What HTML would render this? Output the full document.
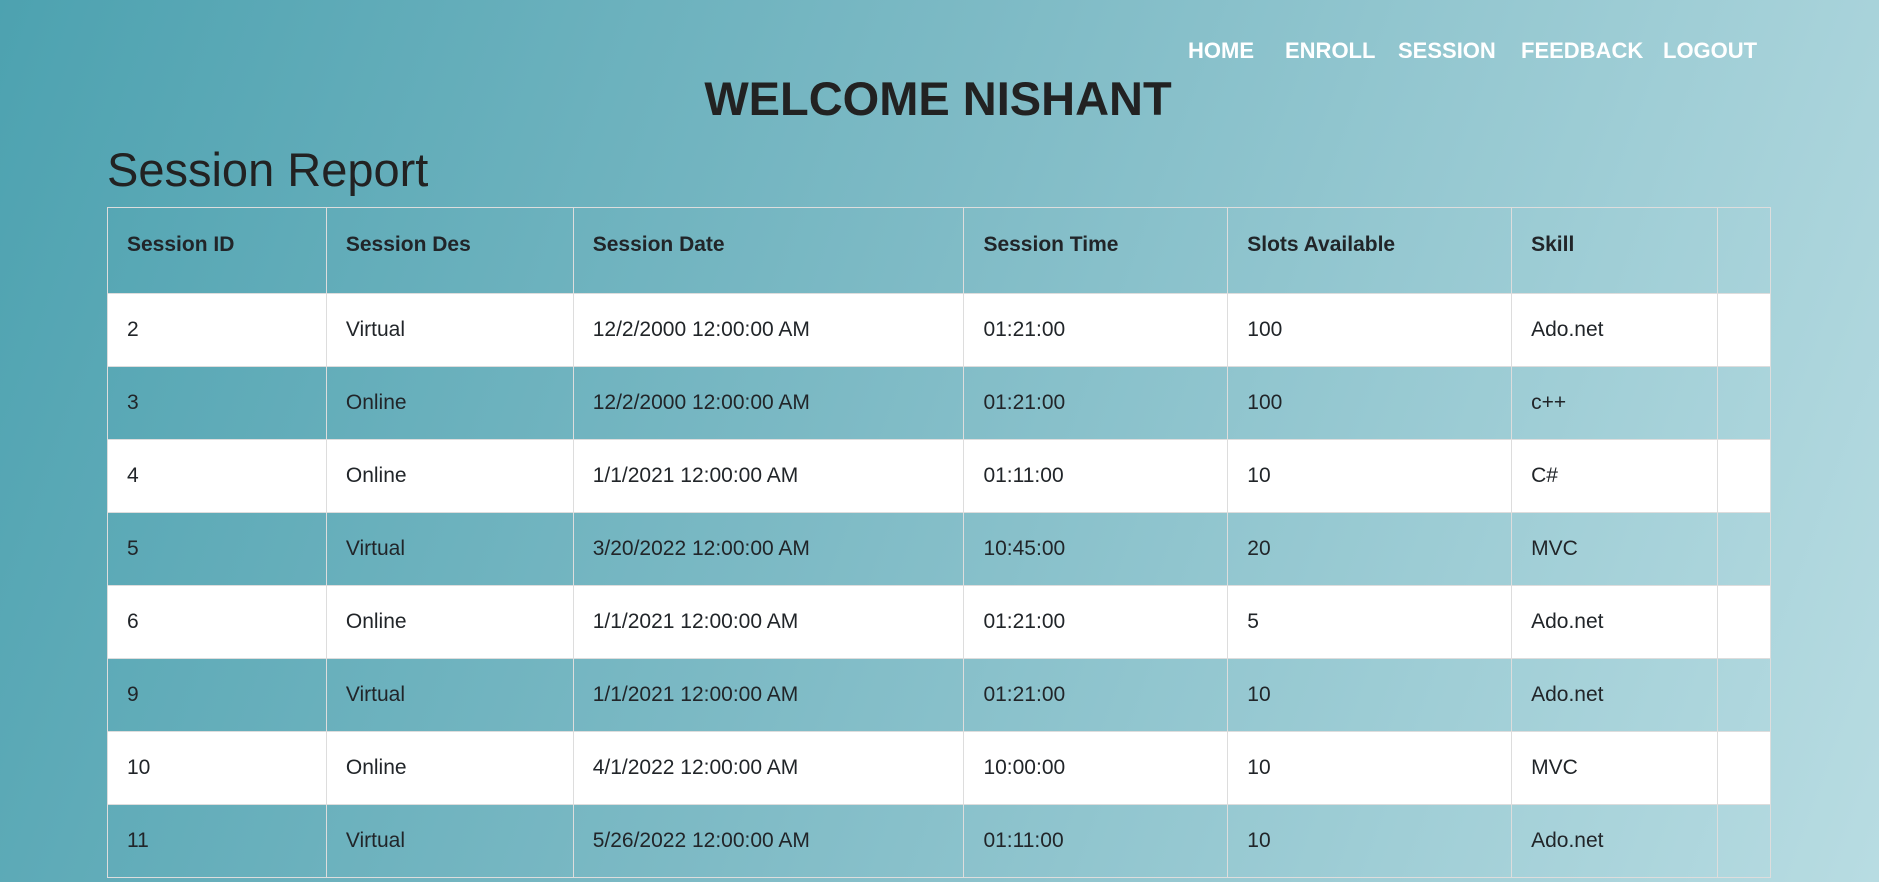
<!DOCTYPE html>
<html><head><meta charset="utf-8"><style>
html,body{margin:0;padding:0}
body{width:1879px;height:882px;overflow:hidden;background:linear-gradient(110deg,#4da2b0 0%,#7dbac5 45%,#b8dce2 100%);font-family:"Liberation Sans",sans-serif;color:#212529;position:relative}
.nav{position:absolute;top:38px;left:1188px;font-weight:bold;font-size:22px;color:#fff}
.nav span{position:absolute;white-space:nowrap}
h1{position:absolute;top:70px;left:0;width:1876px;text-align:center;margin:0;font-size:47px;font-weight:bold;color:#222;line-height:58px}
h2{position:absolute;top:141px;left:107px;margin:0;font-size:47px;font-weight:normal;line-height:58px;color:#222}
table{position:absolute;top:207px;left:107px;border-collapse:collapse;font-size:21px;width:1664px}
td,th{border:1px solid #ddd;padding:0 0 0 19px;text-align:left;height:72px}
th{height:73px;padding-bottom:12px;font-weight:bold;font-size:21px}
tr.w td{background:#fff}
</style></head><body>
<div class="nav"><span style="left:0">HOME</span><span style="left:97px">ENROLL</span><span style="left:210px">SESSION</span><span style="left:333px">FEEDBACK</span><span style="left:475px">LOGOUT</span></div>
<h1>WELCOME NISHANT</h1>
<h2>Session Report</h2>
<table>
<colgroup><col style="width:219px"><col style="width:247px"><col style="width:391px"><col style="width:264px"><col style="width:284px"><col style="width:206px"><col style="width:53px"></colgroup>
<tr><th>Session ID</th><th>Session Des</th><th>Session Date</th><th>Session Time</th><th>Slots Available</th><th>Skill</th><th></th></tr>
<tr class="w"><td>2</td><td>Virtual</td><td>12/2/2000 12:00:00 AM</td><td>01:21:00</td><td>100</td><td>Ado.net</td><td></td></tr>
<tr><td>3</td><td>Online</td><td>12/2/2000 12:00:00 AM</td><td>01:21:00</td><td>100</td><td>c++</td><td></td></tr>
<tr class="w"><td>4</td><td>Online</td><td>1/1/2021 12:00:00 AM</td><td>01:11:00</td><td>10</td><td>C#</td><td></td></tr>
<tr><td>5</td><td>Virtual</td><td>3/20/2022 12:00:00 AM</td><td>10:45:00</td><td>20</td><td>MVC</td><td></td></tr>
<tr class="w"><td>6</td><td>Online</td><td>1/1/2021 12:00:00 AM</td><td>01:21:00</td><td>5</td><td>Ado.net</td><td></td></tr>
<tr><td>9</td><td>Virtual</td><td>1/1/2021 12:00:00 AM</td><td>01:21:00</td><td>10</td><td>Ado.net</td><td></td></tr>
<tr class="w"><td>10</td><td>Online</td><td>4/1/2022 12:00:00 AM</td><td>10:00:00</td><td>10</td><td>MVC</td><td></td></tr>
<tr><td>11</td><td>Virtual</td><td>5/26/2022 12:00:00 AM</td><td>01:11:00</td><td>10</td><td>Ado.net</td><td></td></tr>
</table>
</body></html>
